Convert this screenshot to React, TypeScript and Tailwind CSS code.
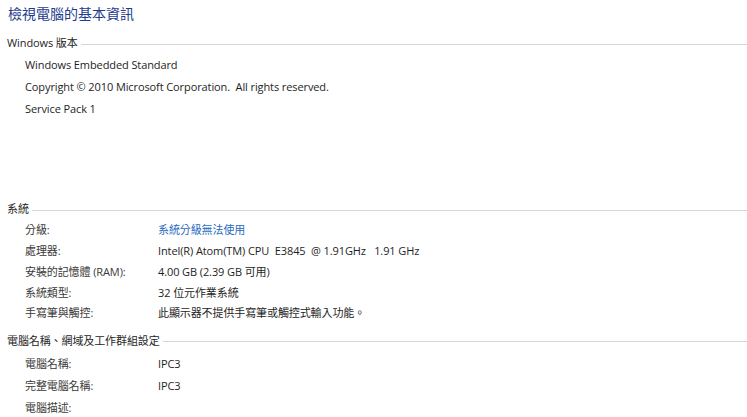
const font = "font-['Open_Sans','Noto_Sans_CJK_TC',sans-serif]";

function SectionHeader({ title }: { title: string }) {
    return (
        <div className="flex items-center pl-[7px] h-[20px]">
            <span className="text-[11px] text-[#1e1e1e] whitespace-nowrap">{title}</span>
            <div className="flex-1 ml-[3px] mt-[2px] border-t border-[#d6d6d6]" />
        </div>
    );
}

function Row({ label, value, link }: { label: string; value?: string; link?: boolean }) {
    return (
        <div className="flex items-center h-[20.8px] pl-[25px] text-[11px]">
            <span className="w-[133px] text-[#3a3a3a]">{label}</span>
            <span className={link ? "text-[#2a6cc0]" : "text-[#1e1e1e]"}>{value}</span>
        </div>
    );
}

export default function App() {
    const system = [
        { label: "分級:", value: "系統分級無法使用", link: true },
        { label: "處理器:", value: "Intel(R) Atom(TM) CPU  E3845  @ 1.91GHz   1.91 GHz" },
        { label: "安裝的記憶體 (RAM):", value: "4.00 GB (2.39 GB 可用)" },
        { label: "系統類型:", value: "32 位元作業系統" },
        { label: "手寫筆與觸控:", value: "此顯示器不提供手寫筆或觸控式輸入功能。" },
    ];

    const names = [
        { label: "電腦名稱:", value: "IPC3" },
        { label: "完整電腦名稱:", value: "IPC3" },
        { label: "電腦描述:", value: "" },
    ];

    return (
        <div className={`w-[747px] h-[417px] bg-white overflow-hidden whitespace-pre tracking-[-0.1px] ${font}`}>
            {/* Title */}
            <div className="pl-[8px] pt-[3px] h-[33px] text-[14px] tracking-normal text-[#1e3c8c]">檢視電腦的基本資訊</div>

            {/* Windows edition */}
            <SectionHeader title="Windows 版本" />
            <div className="pl-[25px] pt-[1px] text-[11px] text-[#1e1e1e]">
                <div className="h-[22px] flex items-center">Windows Embedded Standard</div>
                <div className="h-[22px] flex items-center">Copyright © 2010 Microsoft Corporation.  All rights reserved.</div>
                <div className="h-[22px] flex items-center">Service Pack 1</div>
            </div>

            {/* System */}
            <div className="mt-[79px]">
                <SectionHeader title="系統" />
            </div>
            <div className="pt-[1px]">
                {system.map((r, i) => (
                    <Row key={i} label={r.label} value={r.value} link={r.link} />
                ))}
            </div>

            {/* Computer name */}
            <div className="mt-[7px]">
                <SectionHeader title="電腦名稱、網域及工作群組設定" />
            </div>
            <div className="pt-[2px]">
                {names.map((r, i) => (
                    <div key={i} className="flex items-center h-[22px] pl-[25px] text-[11px]">
                        <span className="w-[133px] text-[#3a3a3a]">{r.label}</span>
                        <span className="text-[#1e1e1e]">{r.value}</span>
                    </div>
                ))}
            </div>
        </div>
    );
}
